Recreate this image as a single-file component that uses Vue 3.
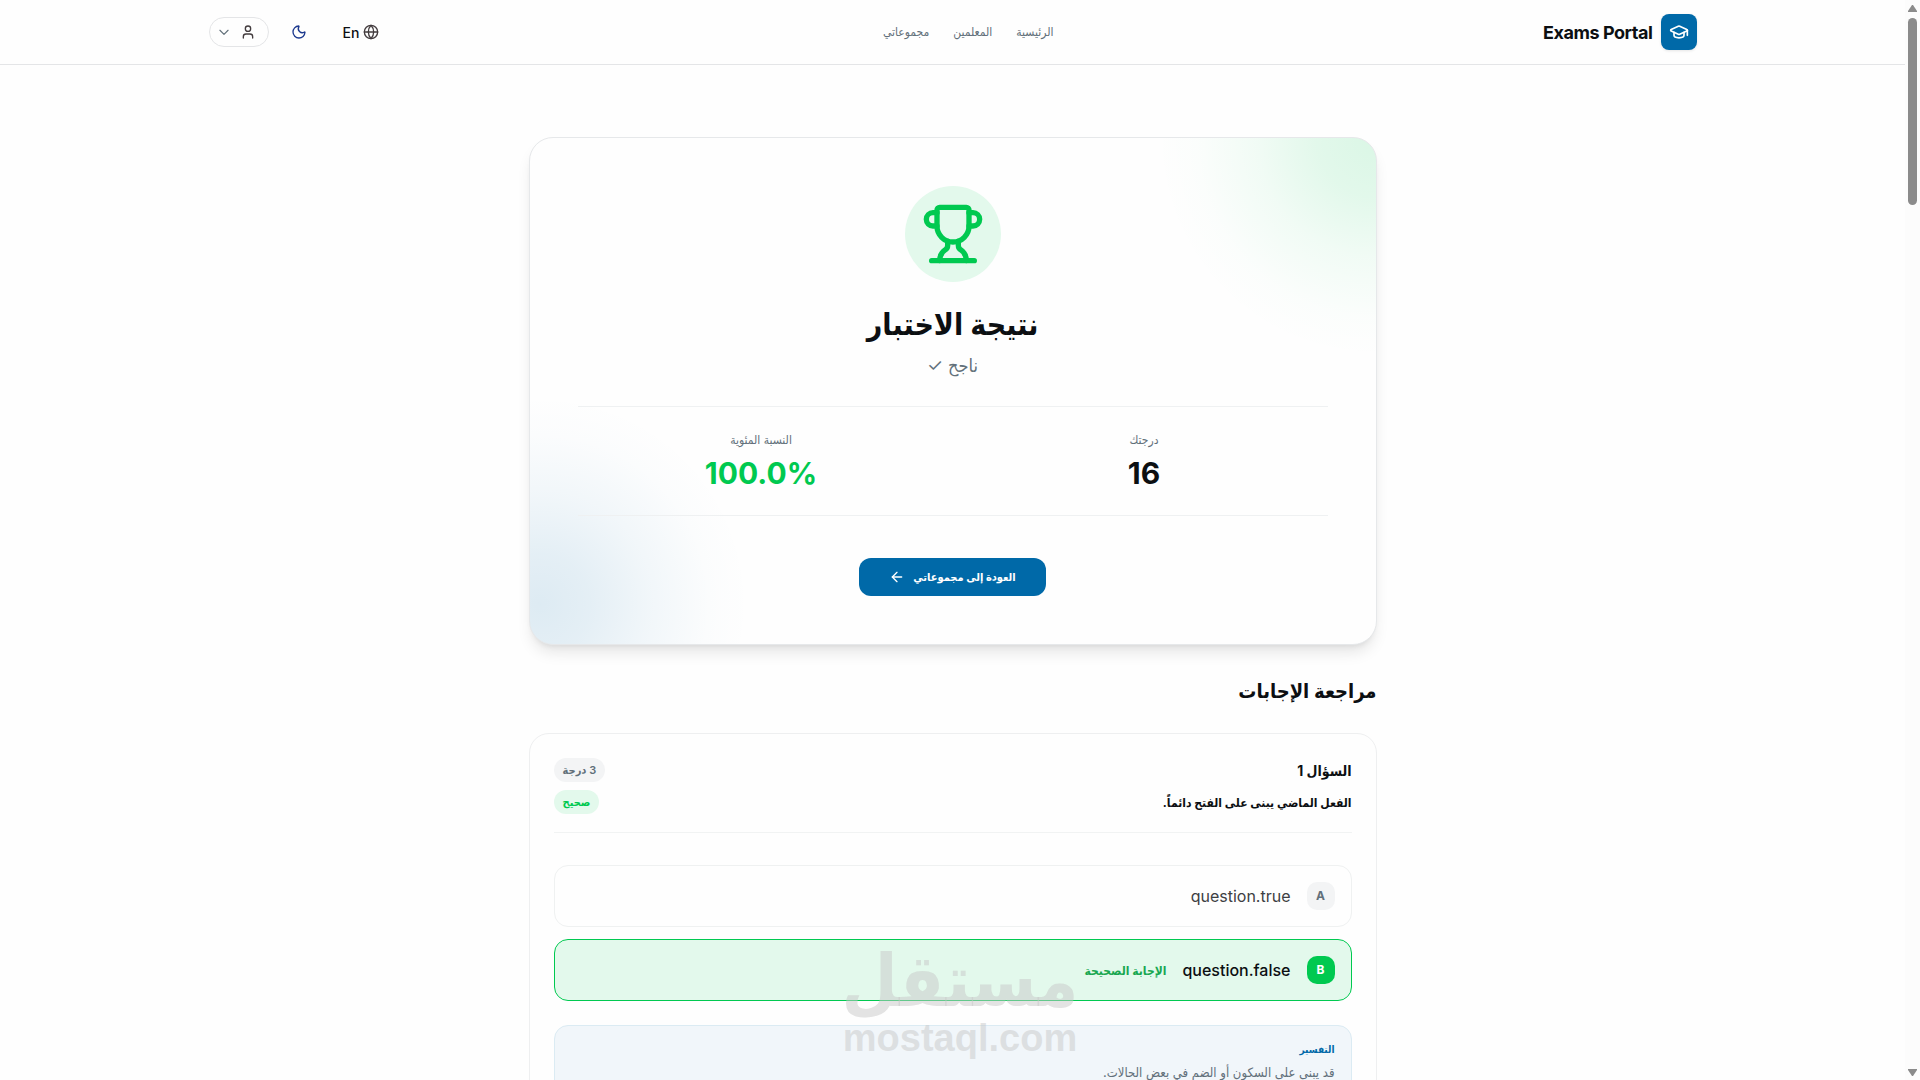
<script setup>
import { ref } from 'vue'

const links = [
  { id: 1, label: 'الرئيسية' },
  { id: 2, label: 'المعلمين' },
  { id: 3, label: 'مجموعاتي' }
]

const question = {
  title: 'السؤال 1',
  text: 'الفعل الماضي يبنى على الفتح دائماً.',
  points: '3 درجة',
  status: 'صحيح',
  explanation: 'قد يبنى على السكون أو الضم في بعض الحالات.'
}

const options = ref([
  { letter: 'A', text: 'question.true', correct: false },
  { letter: 'B', text: 'question.false', correct: true }
])
</script>

<template>
  <div class="shell">
    <div class="page" dir="rtl">
      <header class="topbar">
        <div class="topbar-inner">
          <a href="#" class="brand">
            <span class="brand-logo">
              <svg class="icon" width="20" height="20" viewBox="0 0 24 24">
                <path d="M21.42 10.922a1 1 0 0 0-.019-1.838L12.83 5.18a2 2 0 0 0-1.66 0L2.6 9.08a1 1 0 0 0 0 1.832l8.57 3.908a2 2 0 0 0 1.66 0z" />
                <path d="M22 10v6" />
                <path d="M6 12.5V16a6 3 0 0 0 12 0v-3.5" />
              </svg>
            </span>
            <span class="brand-name">Exams Portal</span>
          </a>

          <nav class="nav">
            <a v-for="link in links" :key="link.id" href="#">{{ link.label }}</a>
          </nav>

          <div class="actions">
            <button type="button" class="lang">
              <svg class="icon" width="16" height="16" viewBox="0 0 24 24">
                <circle cx="12" cy="12" r="10" />
                <path d="M12 2a14.5 14.5 0 0 0 0 20 14.5 14.5 0 0 0 0-20" />
                <path d="M2 12h20" />
              </svg>
              <span>En</span>
            </button>
            <button type="button" class="theme" aria-label="الوضع الليلي">
              <svg class="icon" width="16" height="16" viewBox="0 0 24 24">
                <path d="M20.985 12.486a9 9 0 1 1-9.473-9.472c.405-.022.617.46.402.803a6 6 0 0 0 8.268 8.268c.344-.215.825-.004.803.401" />
              </svg>
            </button>
            <button type="button" class="user" aria-label="الحساب">
              <svg class="icon" width="16" height="16" viewBox="0 0 24 24">
                <circle cx="12" cy="7" r="4" />
                <path d="M19 21v-2a4 4 0 0 0-4-4H9a4 4 0 0 0-4 4v2" />
              </svg>
              <svg class="icon chevron" width="14" height="14" viewBox="0 0 24 24">
                <path d="m5 9 7 7 7-7" />
              </svg>
            </button>
          </div>
        </div>
      </header>

      <main class="content">
        <section class="result-card">
          <div class="trophy">
            <svg class="icon" width="64" height="64" viewBox="0 0 24 24">
              <path d="M10 14.66v1.626a2 2 0 0 1-.976 1.696A5 5 0 0 0 7 21.978" />
              <path d="M14 14.66v1.626a2 2 0 0 0 .976 1.696A5 5 0 0 1 17 21.978" />
              <path d="M18 9h1.5a1 1 0 0 0 0-5H18" />
              <path d="M4 22h16" />
              <path d="M6 9a6 6 0 0 0 12 0V3a1 1 0 0 0-1-1H7a1 1 0 0 0-1 1z" />
              <path d="M6 9H4.5a1 1 0 0 1 0-5H6" />
            </svg>
          </div>
          <h1>نتيجة الاختبار</h1>
          <p class="result-status">ناجح ✓</p>

          <div class="stats">
            <div class="stat">
              <span class="stat-label">درجتك</span>
              <strong>16</strong>
            </div>
            <div class="stat success">
              <span class="stat-label">النسبة المئوية</span>
              <strong dir="ltr">100.0%</strong>
            </div>
          </div>

          <a href="#" class="back">
            <span>العودة إلى مجموعاتي</span>
            <svg class="icon" width="16" height="16" viewBox="0 0 24 24">
              <path d="m12 19-7-7 7-7" />
              <path d="M19 12H5" />
            </svg>
          </a>
        </section>

        <h2>مراجعة الإجابات</h2>

        <article class="question">
          <div class="question-head">
            <div>
              <h3>{{ question.title }}</h3>
              <p class="question-text">{{ question.text }}</p>
            </div>
            <div class="badges">
              <span class="badge">{{ question.points }}</span>
              <span class="badge success">{{ question.status }}</span>
            </div>
          </div>

          <ul class="options">
            <li v-for="option in options" :key="option.letter" class="option" :class="{ correct: option.correct }">
              <span class="letter">{{ option.letter }}</span>
              <span class="option-text">{{ option.text }}</span>
              <span v-if="option.correct" class="option-note">الإجابة الصحيحة</span>
            </li>
          </ul>

          <div class="explanation">
            <h4>التفسير</h4>
            <p>{{ question.explanation }}</p>
          </div>
        </article>
      </main>
    </div>

    <div class="scrollbar">
      <svg width="9" height="7" viewBox="0 0 9 7"><path d="M4 0h1l4 6v1H0V6z" /></svg>
      <div class="thumb"></div>
      <svg class="down" width="9" height="7" viewBox="0 0 9 7"><path d="M0 0h9v1L5 7H4L0 1z" /></svg>
    </div>

    <div class="watermark">
      <span class="watermark-name" dir="rtl">مستقل</span>
      <span class="watermark-url">mostaql.com</span>
    </div>
  </div>
</template>

<style>
body {
  background: #fefefe;
}
</style>

<style scoped>
.shell {
  position: relative;
  display: flex;
  height: 100vh;
  overflow: hidden;
  background: #fefefe;
  color: #0c0f12;
  font-family: Inter, "DejaVu Sans Condensed", "DejaVu Sans", sans-serif;
}

.shell * {
  box-sizing: border-box;
}

h1,
h2,
h3,
h4,
p,
ul {
  margin: 0;
  padding: 0;
}

a {
  color: inherit;
  text-decoration: none;
}

button {
  font: inherit;
  color: inherit;
  background: none;
  border: 0;
  padding: 0;
}

.icon {
  fill: none;
  stroke: currentColor;
  stroke-width: 2;
  stroke-linecap: round;
  stroke-linejoin: round;
}

.page {
  flex: 1;
  min-width: 0;
  overflow: hidden;
}

.topbar {
  border-bottom: 1px solid #e4e5e7;
}

.topbar-inner {
  display: flex;
  justify-content: space-between;
  align-items: center;
  max-width: 1536px;
  height: 64px;
  margin: 0 auto;
  padding: 0 24px;
}

.brand {
  display: flex;
  align-items: center;
  gap: 8px;
}

.brand-logo {
  display: flex;
  align-items: center;
  justify-content: center;
  width: 36px;
  height: 36px;
  border-radius: 8px;
  background: #0069a8;
  color: #fff;
  box-shadow: 0 1px 3px rgba(0, 0, 0, 0.1);
}

.brand-name {
  font-size: 18px;
  font-weight: 700;
  letter-spacing: -0.025em;
}

.nav {
  display: flex;
  gap: 24px;
  font-size: 12px;
  line-height: 20px;
  color: #62707a;
}

.actions {
  display: flex;
  align-items: center;
  gap: 18px;
}

.lang {
  display: flex;
  align-items: center;
  gap: 4px;
  padding: 0 14px;
  font-size: 14px;
  font-weight: 500;
}

.lang .icon,
.user .icon {
  color: #433c3e;
}

.theme {
  display: flex;
  padding: 0 4px;
  color: #1c398e;
}

.user {
  display: flex;
  align-items: center;
  gap: 9px;
  height: 30px;
  padding: 0 12px 0 7px;
  border: 1px solid #e4e5e7;
  border-radius: 15px;
}

.user .chevron {
  color: #62707a;
}

.content {
  max-width: 896px;
  margin: 0 auto;
  padding: 72px 24px;
}

.result-card {
  display: flex;
  flex-direction: column;
  align-items: center;
  padding: 48px;
  border: 1px solid #e6e8ea;
  border-radius: 24px;
  background:
    radial-gradient(circle at 100% 0, rgba(0, 201, 80, 0.14) 0, rgba(0, 201, 80, 0.11) 60px, rgba(0, 201, 80, 0.05) 120px, rgba(0, 201, 80, 0.01) 180px, transparent 220px),
    radial-gradient(circle at 10px calc(100% - 40px), rgba(0, 105, 168, 0.13) 0, rgba(0, 105, 168, 0.1) 50px, rgba(0, 105, 168, 0.05) 110px, rgba(0, 105, 168, 0.01) 170px, transparent 210px),
    #fefefe;
  box-shadow: 0 10px 15px -3px rgba(0, 0, 0, 0.1), 0 4px 6px -4px rgba(0, 0, 0, 0.1);
}

.trophy {
  display: flex;
  align-items: center;
  justify-content: center;
  width: 96px;
  height: 96px;
  border-radius: 50%;
  background: #e3f9ec;
  color: #00c950;
}

h1 {
  margin-top: 24px;
  font-size: 30px;
  line-height: 36px;
}

.result-status {
  margin-top: 8px;
  font-size: 18px;
  line-height: 32px;
  color: #62707a;
}

.stats {
  display: grid;
  grid-template-columns: 1fr 1fr;
  gap: 16px;
  align-self: stretch;
  margin: 24px 0 42px;
  padding: 24px 0;
  border-top: 1px solid #eff1f2;
  border-bottom: 1px solid #eff1f2;
}

.stat {
  display: flex;
  flex-direction: column;
  align-items: center;
  gap: 6px;
}

.stat-label {
  font-size: 12px;
  line-height: 18px;
  color: #62707a;
}

.stat strong {
  font-size: 30px;
  line-height: 36px;
}

.stat.success strong {
  color: #00c950;
}

.back {
  display: flex;
  align-items: center;
  gap: 8px;
  height: 38px;
  padding: 0 30px;
  border-radius: 12px;
  background: #0069a8;
  color: #fff;
  font-size: 11px;
  font-weight: 700;
}

h2 {
  margin-top: 28px;
  font-size: 20px;
  line-height: 36px;
}

.question {
  margin-top: 24px;
  padding: 24px;
  border: 1px solid #eeeff0;
  border-radius: 20px;
}

.question-head {
  display: flex;
  justify-content: space-between;
  padding-bottom: 16px;
  border-bottom: 1px solid #f1f3f3;
}

h3 {
  font-size: 14px;
  line-height: 26px;
}

.question-text {
  margin-top: 6px;
  font-size: 12px;
  font-weight: 700;
  line-height: 26px;
}

.badges {
  display: flex;
  flex-direction: column;
  align-items: flex-end;
  gap: 8px;
}

.badge {
  padding: 0 9px;
  border-radius: 12px;
  background: #f3f4f5;
  color: #62707a;
  font-size: 11px;
  font-weight: 600;
  line-height: 24px;
}

.badge.success {
  background: #e3f9ec;
  color: #00c950;
}

.options {
  display: flex;
  flex-direction: column;
  gap: 12px;
  margin-top: 32px;
  list-style: none;
}

.option {
  display: flex;
  align-items: center;
  gap: 16px;
  padding: 16px;
  border: 1px solid #eff1f1;
  border-radius: 14px;
}

.option.correct {
  border-color: #00c950;
  background: #e3f9ec;
}

.letter {
  width: 28px;
  border-radius: 10px;
  background: #f3f4f5;
  color: #62707a;
  font-size: 12px;
  font-weight: 700;
  line-height: 28px;
  text-align: center;
}

.correct .letter {
  background: #00c950;
  color: #fff;
}

.option-text {
  font-size: 16px;
  color: #3d4043;
}

.correct .option-text {
  font-weight: 500;
  color: #0c0f12;
}

.option-note {
  font-size: 12px;
  font-weight: 700;
  color: #18a750;
}

.explanation {
  margin-top: 24px;
  padding: 12px 16px;
  border: 1px solid #dbebf3;
  border-radius: 14px;
  background: #f1f6fa;
}

h4 {
  font-size: 10px;
  line-height: 22px;
  color: #0069a8;
}

.explanation p {
  font-size: 13px;
  line-height: 24px;
  color: #62707a;
}

/* stamp centred near the bottom of the viewport */
.watermark {
  position: absolute;
  right: 0;
  bottom: 22px;
  left: 0;
  display: flex;
  flex-direction: column;
  align-items: center;
  font-weight: 700;
  color: rgba(200, 200, 200, 0.5);
  pointer-events: none;
}

.watermark-name {
  font-size: 72px;
  line-height: 76px;
}

.watermark-url {
  font-family: "Liberation Sans", sans-serif;
  font-size: 38px;
  line-height: 40px;
}

.scrollbar {
  display: flex;
  flex-direction: column;
  align-items: center;
  gap: 6px;
  width: 15px;
  padding: 5px 0 4px;
  background: #fcfcfc;
}

.scrollbar path {
  fill: #8b8b8b;
}

.thumb {
  width: 9px;
  height: 187px;
  border-radius: 5px;
  background: #8b8b8b;
}

.down {
  margin-top: auto;
}
</style>
